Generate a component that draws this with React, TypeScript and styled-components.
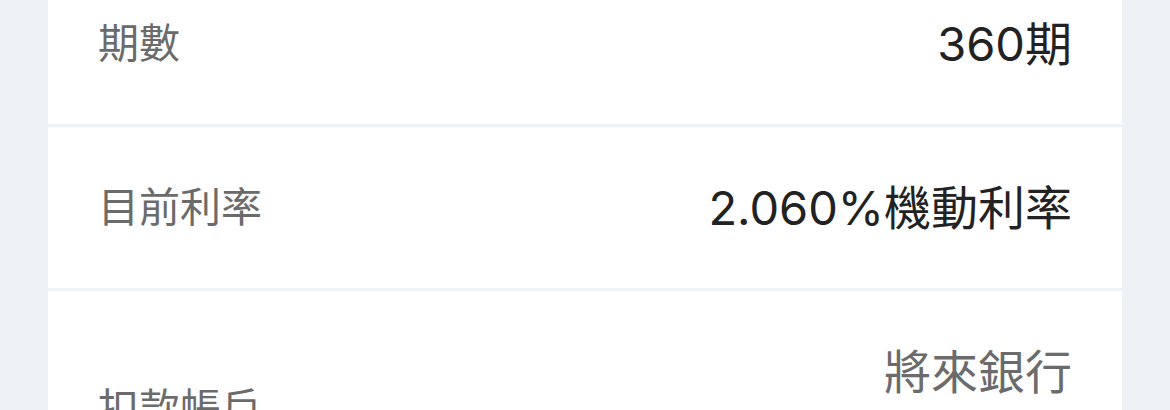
import styled, { createGlobalStyle } from "styled-components";

const GlobalStyle = createGlobalStyle`
  html, body {
    margin: 0;
    padding: 0;
    background: #eef2f6;
  }
  body {
    font-family: "Inter", "Noto Sans CJK TC", sans-serif;
  }
`;

const Page = styled.div`
  width: 100%;
  height: 410px;
  overflow: hidden;
  background: #eef2f6;
`;

const Card = styled.div`
  margin: -37px 48px 0;
  background: #fff;
`;

const Row = styled.div`
  display: flex;
  align-items: center;
  justify-content: space-between;
  padding: 50px 50px;
  border-bottom: 3px solid #eef2f6;
`;

const Label = styled.div`
  font-size: 41px;
  line-height: 61px;
  color: #6b6b6b;
`;

const Values = styled.div`
  display: flex;
  flex-direction: column;
  align-items: flex-end;
  gap: 13px;
`;

const Value = styled.div<{ $muted?: boolean }>`
  font-size: 47px;
  line-height: 61px;
  color: ${(p) => (p.$muted ? "#6b6b6b" : "#222")};
  white-space: nowrap;
`;

const rows = [
  { label: "期數", values: [{ text: "360期" }] },
  { label: "目前利率", values: [{ text: "2.060%機動利率" }] },
  {
    label: "扣款帳戶",
    values: [{ text: "將來銀行", muted: true }, { text: "(823) 8888****1234" }],
  },
];

const App = () => {
  return (
    <Page>
      <GlobalStyle />
      <Card>
        {rows.map((row, index) => (
          <Row key={index}>
            <Label>{row.label}</Label>
            <Values>
              {row.values.map((v, i) => (
                <Value key={i} $muted={v.muted}>
                  {v.text}
                </Value>
              ))}
            </Values>
          </Row>
        ))}
      </Card>
    </Page>
  );
};

export default App;
